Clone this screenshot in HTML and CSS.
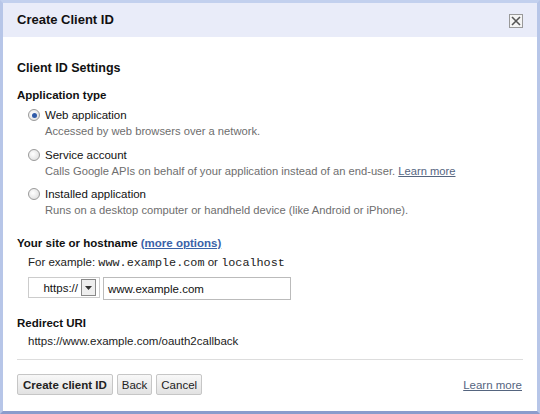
FILE: index.html
```html
<!DOCTYPE html>
<html lang="en">
<head>
    <meta charset="UTF-8">
    <title>Create Client ID</title>
    <link rel="stylesheet" href="styles.css">
</head>
<body>
    <div class="dialog">
        <!-- Title bar -->
        <div class="dialog-title">
            <span>Create Client ID</span>
            <span class="close-btn">
                <svg width="10" height="10" viewBox="0 0 10 10"><path d="M1 1L9 9M9 1L1 9" stroke="#555" stroke-width="1.6"/></svg>
            </span>
        </div>

        <div class="dialog-body">
            <h2 class="section-title">Client ID Settings</h2>

            <div class="field-label">Application type</div>
            <div class="option">
                <span class="radio checked"></span>
                <div>
                    <div class="option-name">Web application</div>
                    <div class="option-desc">Accessed by web browsers over a network.</div>
                </div>
            </div>
            <div class="option">
                <span class="radio"></span>
                <div>
                    <div class="option-name">Service account</div>
                    <div class="option-desc">Calls Google APIs on behalf of your application instead of an end-user. <a href="#">Learn more</a></div>
                </div>
            </div>
            <div class="option">
                <span class="radio"></span>
                <div>
                    <div class="option-name">Installed application</div>
                    <div class="option-desc">Runs on a desktop computer or handheld device (like Android or iPhone).</div>
                </div>
            </div>

            <div class="field-label site-label">Your site or hostname <a href="#" class="more">(more options)</a></div>
            <div class="example">For example: <code>www.example.com</code> or <code>localhost</code></div>
            <div class="host-row">
                <span class="select">https://<span class="select-arrow"><svg width="7" height="4" viewBox="0 0 7 4"><path d="M0 0H7L3.5 4Z" fill="#333"/></svg></span></span>
                <span class="text-input">www.example.com</span>
            </div>

            <div class="field-label redirect-label">Redirect URI</div>
            <div class="redirect">https://www.example.com/oauth2callback</div>

            <div class="footer">
                <div class="buttons">
                    <button class="btn primary">Create client ID</button>
                    <button class="btn">Back</button>
                    <button class="btn">Cancel</button>
                </div>
                <a href="#" class="learn">Learn more</a>
            </div>
        </div>
    </div>
</body>
</html>
```

FILE: styles.css
```css
/* Page */
body {
    margin: 0;
    font-family: Arial, "Liberation Sans", sans-serif;
    font-size: 11.5px;
    line-height: 16px;
    color: #111;
    background: #fff;
}
a {
    color: #55657f;
}
/* Dialog frame */
.dialog {
    width: 534px;
    height: 408px;
    border: 3px solid #b7c6e8;
    border-top-color: #c2d0ee;
    border-bottom-color: #8b9ccc;
    background: #fff;
    display: flex;
    flex-direction: column;
}
.dialog-title {
    height: 34px;
    background: #e9ecf9;
    display: flex;
    align-items: center;
    justify-content: space-between;
    padding: 0 14px 0 14px;
    font-size: 13px;
    font-weight: bold;
}
.close-btn {
    width: 12px;
    height: 12px;
    border: 1px solid #999;
    background: #f4f4f4;
    display: flex;
    align-items: center;
    justify-content: center;
    margin-top: 2px;
}
.dialog-body {
    padding: 23px 14px 0 14px;
    flex: 1;
    display: flex;
    flex-direction: column;
}
.section-title {
    font-size: 12.5px;
    line-height: 16px;
    font-weight: bold;
    margin: 0 0 11px 0;
}
.field-label {
    font-weight: bold;
    margin-bottom: 4px;
}
.option {
    display: flex;
    gap: 5px;
    padding-left: 11px;
    margin-bottom: 7.5px;
}
.option-desc {
    color: #6e6e6e;
    font-size: 11.2px;
}
.radio {
    width: 10px;
    height: 10px;
    border: 1px solid #9a9a9a;
    border-radius: 50%;
    background: radial-gradient(circle at 40% 40%, #fff, #d8d8d8);
    margin-top: 2px;
    display: flex;
    align-items: center;
    justify-content: center;
}
.radio.checked::after {
    content: "";
    width: 5px;
    height: 5px;
    border-radius: 50%;
    background: #2f5aa8;
}
.site-label {
    margin-top: 9.5px;
    margin-bottom: 2px;
}
.more {
    color: #3a62a8;
}
.example {
    padding-left: 11px;
    color: #222;
    line-height: 18px;
}
.example code {
    font-family: "Liberation Mono", "Courier New", monospace;
    font-size: 11.8px;
}
.host-row {
    display: flex;
    gap: 3px;
    padding-left: 11px;
    margin-top: 5px;
}
.select {
    width: 67px;
    height: 19px;
    border: 1px solid #ccc;
    display: flex;
    align-items: center;
    justify-content: flex-end;
    gap: 3px;
    padding-right: 3px;
}
.select-arrow {
    width: 13px;
    height: 15px;
    border: 1px solid #888;
    background: #eee;
    display: flex;
    align-items: center;
    justify-content: center;
}
.text-input {
    width: 182px;
    height: 21px;
    border: 1px solid #bbb;
    padding-left: 4px;
    display: flex;
    align-items: center;
}
.redirect-label {
    margin-top: 15px;
    margin-bottom: 2px;
}
.redirect {
    padding-left: 11px;
    color: #222;
}
.footer {
    margin-top: 10px;
    border-top: 1px solid #ddd;
    padding-top: 14px;
    display: flex;
    justify-content: space-between;
    align-items: flex-end;
}
.buttons {
    display: flex;
    gap: 4px;
}
.btn {
    font-family: Arial, "Liberation Sans", sans-serif;
    font-size: 11.5px;
    height: 21px;
    padding: 0 4px;
    border: 1px solid #c6c6c6;
    border-radius: 2px;
    background: linear-gradient(#f8f8f8, #e2e2e2);
    color: #222;
}
.btn.primary {
    font-weight: bold;
    padding: 0 5px;
}
.learn {
    margin-bottom: 2px;
    margin-right: 1px;
}
```
